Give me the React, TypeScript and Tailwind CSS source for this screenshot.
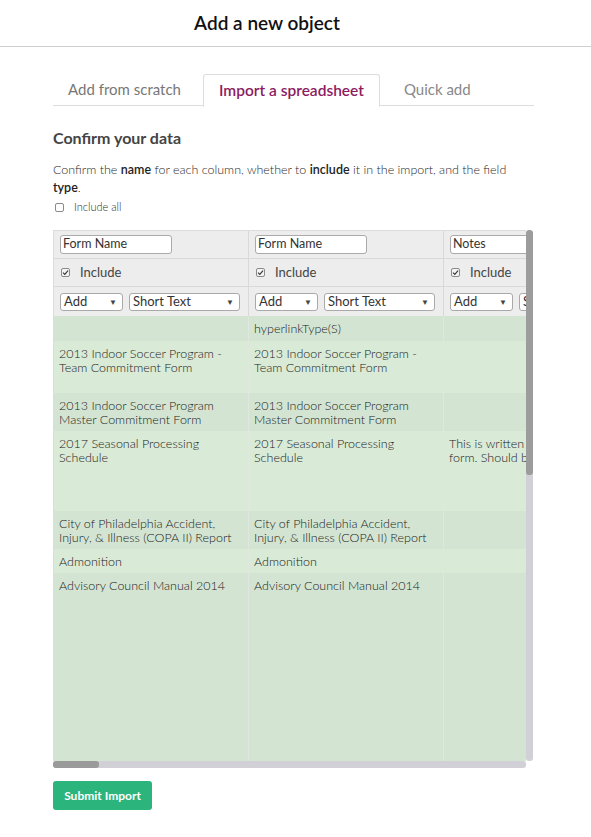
import React from "react"

const font = { fontFamily: "Lato, 'Noto Sans', sans-serif" }

type Row = { cells: string[][]; h: number; dark: boolean }

const rows: Row[] = [
	{ cells: [[], ["hyperlinkType(S)"], []], h: 25, dark: true },
	{
		cells: [
			["2013 Indoor Soccer Program -", "Team Commitment Form"],
			["2013 Indoor Soccer Program -", "Team Commitment Form"],
			[],
		],
		h: 52,
		dark: false,
	},
	{
		cells: [
			["2013 Indoor Soccer Program", "Master Commitment Form"],
			["2013 Indoor Soccer Program", "Master Commitment Form"],
			[],
		],
		h: 38,
		dark: true,
	},
	{
		cells: [
			["2017 Seasonal Processing", "Schedule"],
			["2017 Seasonal Processing", "Schedule"],
			["This is written for a", "form. Should be"],
		],
		h: 80,
		dark: false,
	},
	{
		cells: [
			["City of Philadelphia Accident,", "Injury, & Illness (COPA II) Report"],
			["City of Philadelphia Accident,", "Injury, & Illness (COPA II) Report"],
			[],
		],
		h: 38,
		dark: true,
	},
	{ cells: [["Admonition"], ["Admonition"], []], h: 24, dark: false },
	{ cells: [["Advisory Council Manual 2014"], ["Advisory Council Manual 2014"], []], h: 188, dark: true },
]

const columns = ["Form Name", "Form Name", "Notes"]

const Check = () => (
	<span className="inline-flex w-[9px] h-[9px] items-center justify-center border border-[#8a8a8a] rounded-[2px] bg-[#f4f4f4] shrink-0">
		<svg viewBox="0 0 10 10" className="w-[7px] h-[7px]">
			<path d="M1.5 5.2 L4 7.6 L8.6 2.4" fill="none" stroke="#333" strokeWidth="1.6" />
		</svg>
	</span>
)

const Select = ({ label, w }: { label: string; w: string }) => (
	<div
		className={`${w} h-[18px] shrink-0 flex items-center justify-between border border-[#a9a9a9] rounded-[3px] bg-white pl-[3px] pr-[5px] text-[13px] leading-none text-[#333] overflow-hidden whitespace-nowrap`}>
		<span>{label}</span>
		<span className="text-[8px] text-[#444]">▼</span>
	</div>
)

export default function App() {
	return (
		<div className="w-[591px] h-[837px] bg-white text-[#555]" style={font}>
			<div className="h-[47px] border-b border-[#cfcfcf] flex items-center justify-center pr-[57px]">
				<h1 className="text-[19px] font-semibold text-[#111]">Add a new object</h1>
			</div>

			<div className="px-[53px]">
				<div className="mt-[27px] flex gap-[7px] border-b border-[#dddddd] h-[32px] w-[481px]">
					<div className="px-[15px] flex items-center text-[15px] text-[#777]">Add from scratch</div>
					<div className="px-[15px] flex items-center text-[15.5px] font-semibold text-[#8b1c62] bg-white border border-[#dddddd] border-b-white rounded-t-[3px] h-[33px]">
						Import a spreadsheet
					</div>
					<div className="px-[15px] flex items-center text-[15px] text-[#888] ml-[2px]">Quick add</div>
				</div>

				<h2 className="mt-[22px] text-[16px] font-bold text-[#444] leading-[20px]">Confirm your data</h2>
				<p className="mt-[13px] w-[481px] text-[12.5px] font-light leading-[18px] text-[#2a2a2a]">
					Confirm the <b className="text-[#222] font-semibold">name</b> for each column, whether to{" "}
					<b className="text-[#222] font-semibold">include</b> it in the import, and the field{" "}
					<b className="text-[#222] font-semibold">type</b>.
				</p>
				<label className="flex items-center gap-[10px] text-[11px] font-light text-[#2a2a2a] leading-[14px] mt-[3px]">
					<span className="inline-block w-[9px] h-[9px] border border-[#8a8a8a] rounded-[2px] bg-white ml-[2px]" />
					Include all
				</label>

				<div className="mt-[16px] w-[480px] flex flex-col">
					<div className="flex h-[531px]">
						<div className="w-[473px] overflow-hidden border-t border-l border-[#dcdcdc]">
							<div className="w-[600px]">
								<div className="flex bg-[#ededed]">
									{columns.map((c, i) => (
										<div key={i} className="w-[195px] shrink-0 border-r border-[#d9d9d9]">
											<div className="h-[28px] border-b border-[#d9d9d9] flex items-center px-[6px]">
												<div className="w-[112px] h-[19px] border border-[#aaaaaa] rounded-[3px] bg-white flex items-center px-[2px] text-[12.5px] text-[#333]">
													{c}
												</div>
											</div>
											<div className="h-[28px] border-b border-[#d9d9d9] flex items-center gap-[10px] pl-[7px] text-[13px] text-[#444]">
												<Check />
												Include
											</div>
											<div className="h-[29px] flex items-center gap-[6px] px-[6px]">
												<Select label="Add" w="w-[63px]" />
												<Select label="Short Text" w="w-[111px]" />
											</div>
										</div>
									))}
								</div>
								{rows.map((r, ri) => (
									<div key={ri} className={`flex ${r.dark ? "bg-[#d3e5d2]" : "bg-[#d9ead7]"}`} style={{ height: r.h }}>
										{r.cells.map((lines, ci) => (
											<div
												key={ci}
												className="w-[195px] shrink-0 border-r border-[#dfe7de] pl-[5px] pt-[6px] text-[12.5px] font-light leading-[14px] text-[#222] whitespace-nowrap overflow-hidden">
												{lines.map((l, li) => (
													<div key={li}>{l}</div>
												))}
											</div>
										))}
									</div>
								))}
							</div>
						</div>
						<div className="w-[7px] flex flex-col rounded-[3px] bg-[#d0d0d6] overflow-hidden">
							<div className="h-[245px] bg-[#9c9c9c] rounded-[3px]" />
						</div>
					</div>
					<div className="h-[7px] w-[473px] rounded-[3px] bg-[#d0d0d6] flex">
						<div className="w-[46px] bg-[#9a9a9a] rounded-[3px]" />
					</div>
				</div>

				<button className="mt-[13px] h-[29px] w-[99px] rounded-[3px] bg-[#2bb57c] text-white text-[12px] font-bold">
					Submit Import
				</button>
			</div>
		</div>
	)
}
